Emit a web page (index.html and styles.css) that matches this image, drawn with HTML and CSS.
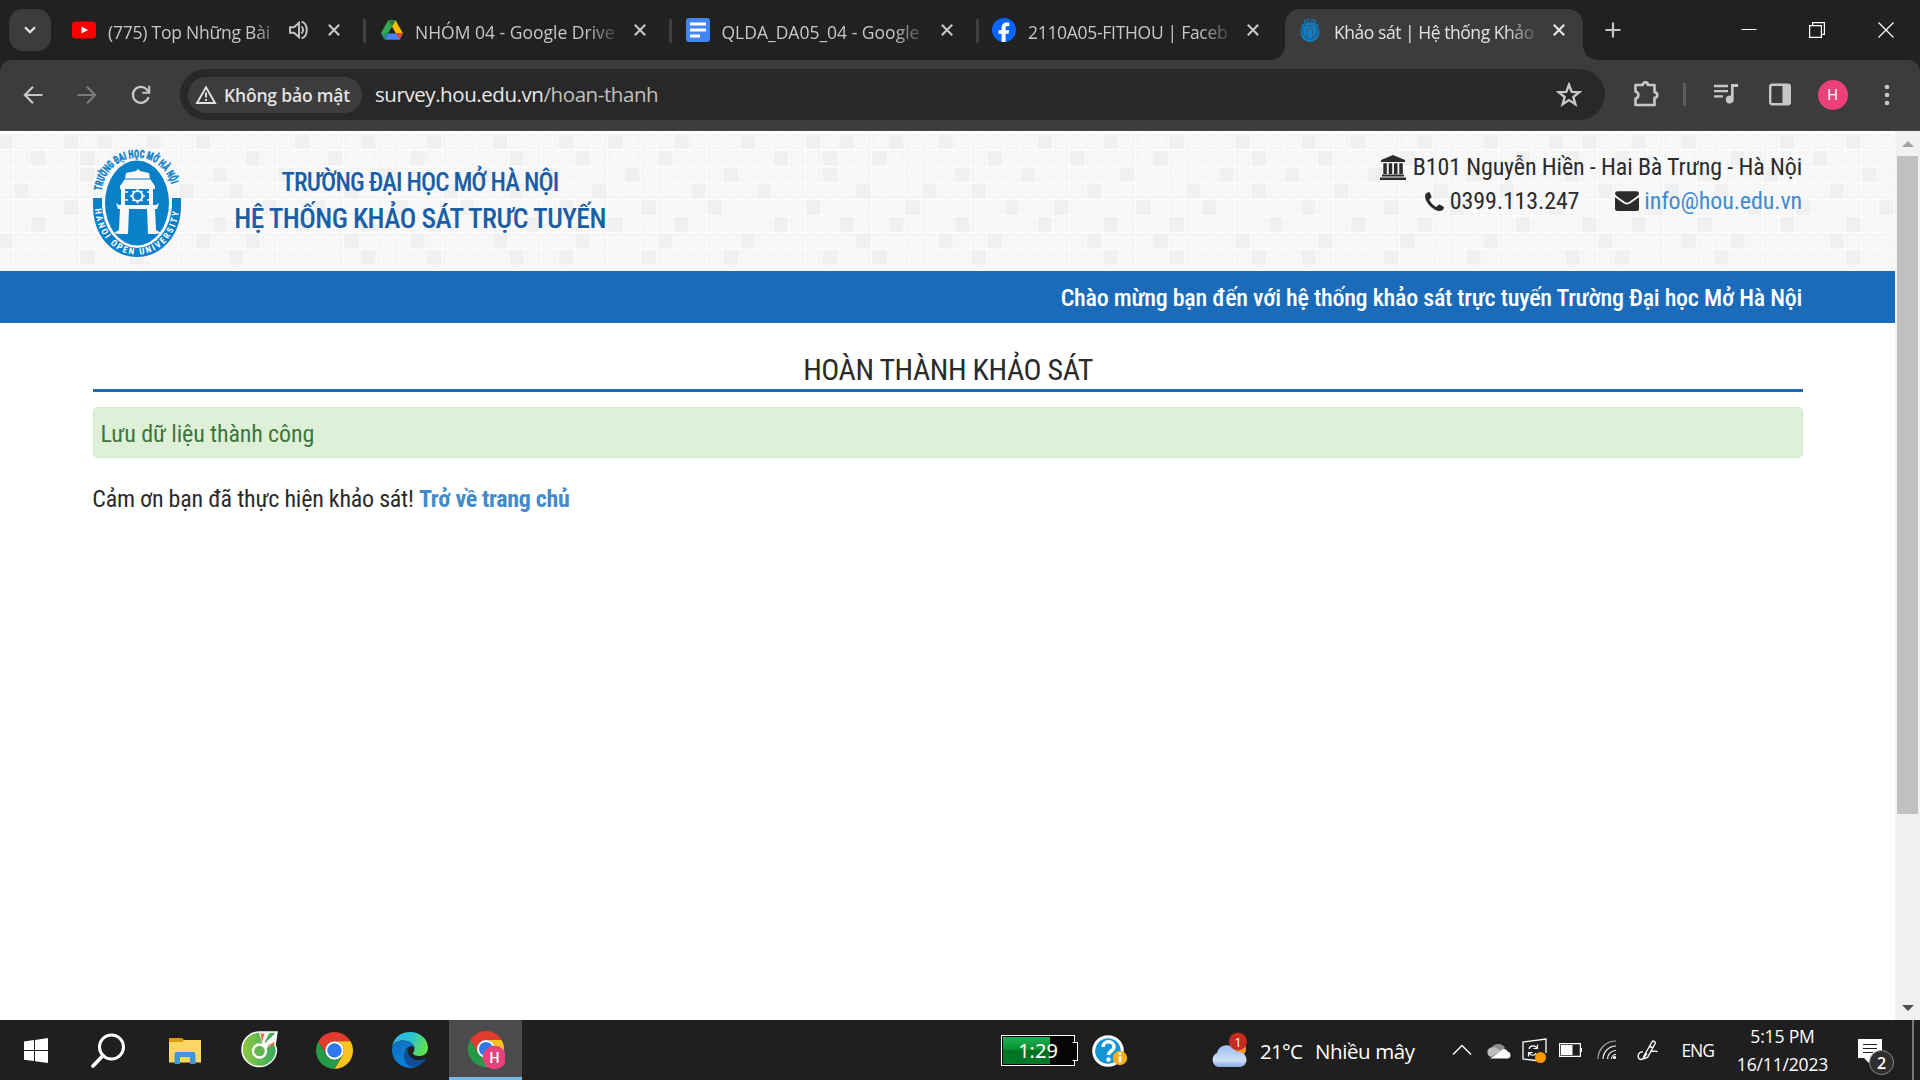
FILE: index.html
```html
<!DOCTYPE html>
<html lang="vi">
<head>
<meta charset="utf-8">
<title>Khảo sát | Hệ thống Khảo sát</title>
<link rel="stylesheet" href="styles.css">
</head>
<body>
<svg class="defs" width="0" height="0" aria-hidden="true">
  <symbol id="i-x" viewBox="0 0 22 22"><path d="M5.8 5.8l10.4 10.4M16.2 5.8L5.8 16.2" fill="none" stroke="currentColor" stroke-width="2.1"/></symbol>
  <symbol id="i-chrome" viewBox="0 0 48 48">
    <path fill="#e33b2e" d="M13.61 30 3.22 12A24 24 0 0 1 44.78 12H24A12 12 0 0 0 13.61 30z"/>
    <path fill="#fcc31e" d="M34.39 30 24 48A24 24 0 0 0 44.78 12H24a12 12 0 0 1 10.39 18z"/>
    <path fill="#259b48" d="M13.61 30A12 12 0 0 0 34.39 30L24 48A24 24 0 0 1 3.22 12z"/>
    <circle cx="24" cy="24" r="12" fill="#fff"/><circle cx="24" cy="24" r="9.4" fill="#2f78ee"/>
  </symbol>
  <symbol id="i-gate" viewBox="0 0 88 108">
    <path fill="#0a80c9" d="M0 49h9v10h70V49h9v8C88 87 68 108 44 108S0 87 0 57z"/>
    <ellipse cx="44" cy="54" rx="35" ry="45" fill="#f8f8f8"/>
    <ellipse cx="44" cy="54" rx="32" ry="42.500" fill="#0a80c9"/>
    <path fill="#f8f8f8" d="M33 24l10-2 2-2 2 2 9 2 1 6 5 7v3H27v-3l5-7zM28 40h4v16h-4zM56 40h4v16h-4zM23 54l3 2h37l3-2-2 6H25zM27 60h9l-1 25h-9l-5-1 5-3zM54 60h8l1 21 5 3-5 1h-8z"/>
    <path stroke="#0a80c9" stroke-width="1" d="M32 30h25"/>
    <circle cx="44.500" cy="47" r="5" fill="none" stroke="#f8f8f8" stroke-width="2"/>
    <path d="M44.500 39.500v3M44.500 51.500v3M37 47h3M49 47h3M39.500 42l2 2M47.500 50l2 2M49.500 42l-2 2M41.500 50l-2 2M32 43h3M32 51h3M54 43h3M54 51h3" stroke="#f8f8f8" stroke-width="1.500"/>
  </symbol>
</svg>

<header class="chrome">
  <div class="tabstrip">
    <button class="tab-search"><svg width="18" height="18" viewBox="0 0 18 18"><path d="M4 6.200l5 5 5-5" fill="none" stroke="#e6e6e6" stroke-width="2.300"/></svg></button>
    <div class="tab">
      <svg class="fav" viewBox="0 0 24 24"><rect y="3.500" width="24" height="17" rx="4" fill="#f00"/><path d="M9.500 8.500v7l6.500-3.500z" fill="#fff"/></svg>
      <span class="title short">(775) Top Những Bài</span>
      <svg class="snd" width="22" height="22" viewBox="0 0 22 22" fill="none" stroke="#c7c7c7" stroke-width="1.900"><path d="M2 8.300h4l5-4.500v14.400l-5-4.500H2z"/><path d="M13.500 7.300c2 2 2 5.400 0 7.400" /><path d="M13.500 2.700c7 2 7 14.600 0 16.600"/></svg>
      <svg class="x"><use href="#i-x"/></svg>
    </div>
    <div class="tab sep">
      <svg class="fav drive" viewBox="0 0 87.300 78"><path fill="#4285f4" d="M16 78L29 52h58L74 78z"/><path fill="#34a853" d="M29 0L0 51l14 27L44 26z"/><path fill="#fbbc04" d="M29 0h29l29 52H58z"/><path fill="#ea4335" d="M58 52h29L74 78z"/><path fill="#188038" d="M29 0h29L44 26z"/><path fill="#1967d2" d="M14 78l15-26H0z" opacity=".35"/><path fill="#202221" d="M44 27l14 25H29z"/></svg>
      <span class="title">NHÓM 04 - Google Drive</span>
      <svg class="x"><use href="#i-x"/></svg>
    </div>
    <div class="tab sep">
      <svg class="fav" viewBox="0 0 24 24"><rect width="24" height="24" rx="3" fill="#4285f4"/><path d="M4 6h16M4 12h16M4 18h10" stroke="#fff" stroke-width="2.800"/></svg>
      <span class="title">QLDA_DA05_04 - Google</span>
      <svg class="x"><use href="#i-x"/></svg>
    </div>
    <div class="tab sep">
      <svg class="fav" viewBox="0 0 24 24"><circle cx="12" cy="12" r="12" fill="#0866ff"/><path fill="#fff" d="M9.600 24v-8.200H6.500v-3.600h3.100v-1.600C9.600 6.300 11.500 4.500 15 4.500c.8 0 1.700.1 2.300.3v3.100h-1.600c-1.500 0-2.100.7-2.100 2.200v2.100h3.600l-.7 3.600h-2.900V24z"/></svg>
      <span class="title tight">2110A05-FITHOU | Faceb</span>
      <svg class="x"><use href="#i-x"/></svg>
    </div>
    <div class="tab active">
      <svg class="fav" viewBox="0 0 24 24"><path d="M6 4l2-2M9 2l2-1M13 1l2 1M16 2l2 2M4 6l1 2M20 6l-1 2" stroke="#0a80c9" stroke-width="1.500"/><ellipse cx="12" cy="13.500" rx="9.500" ry="10.500" fill="#0a80c9"/><ellipse cx="12" cy="12.500" rx="7.600" ry="8.600" fill="none" stroke="#3c3c3c" stroke-width=".8"/><path d="M8 11h8M8 8h8M9 12v8M15 12v8" stroke="#3c5f7c" stroke-width="1.300"/></svg>
      <span class="title tighter">Khảo sát | Hệ thống Khảo</span>
      <svg class="x"><use href="#i-x"/></svg>
    </div>
    <svg class="plus" width="16" height="16" viewBox="0 0 16 16"><path d="M8 .5v15M.5 8h15" stroke="#c7c7c7" stroke-width="2.200"/></svg>
    <div class="winbtns">
      <svg width="16" height="16" viewBox="0 0 16 16"><path d="M.5 7.500h15" stroke="#fff"/></svg>
      <svg width="16" height="16" viewBox="0 0 16 16" fill="none" stroke="#fff" stroke-width="1.200"><path d="M.6 3.600h11.800v11.800H.6zM3.600 3.600v-3h11.800v11.800h-3"/></svg>
      <svg width="16" height="16" viewBox="0 0 16 16"><path d="M.5.5l15 15M15.500.5l-15 15" stroke="#fff" stroke-width="1.200"/></svg>
    </div>
  </div>
  <div class="toolbar">
    <svg class="nav" viewBox="0 0 20 20"><path d="M19.500 10H2.500M10 1.800L1.900 10l8.100 8.200" fill="none" stroke="#c7c7c7" stroke-width="2.200"/></svg>
    <svg class="nav dim" viewBox="0 0 20 20"><path d="M.5 10h17M10 1.800l8.100 8.200-8.100 8.200" fill="none" stroke="#7b7b7b" stroke-width="2.200"/></svg>
    <svg class="nav reload" viewBox="0 0 20 20"><path d="M17.600 12A8 8 0 1 1 15.800 4.400L18 6.800" fill="none" stroke="#c7c7c7" stroke-width="2.200"/><path d="M19.300.8v8h-8V6.700h5.900V.8z" fill="#c7c7c7"/></svg>
    <div class="omnibox">
      <div class="chip">
        <svg width="22" height="20" viewBox="0 0 22 20"><path d="M11 2.300L20 18H2z" fill="none" stroke="#e3e3e3" stroke-width="1.900"/><path d="M11 7.500v5M11 14v2" stroke="#e3e3e3" stroke-width="1.900"/></svg>
        <span>Không bảo mật</span>
      </div>
      <span class="url">survey.hou.edu.vn<span class="path">/hoan-thanh</span></span>
      <svg class="star" viewBox="0 0 24 24"><path d="M12 2.500l2.500 6.600 7 .3-5.500 4.400 1.900 6.800-5.900-3.900-5.900 3.900L8 13.800 2.500 9.400l7-.3z" fill="none" stroke="#c7c7c7" stroke-width="2.200"/></svg>
    </div>
    <svg class="puzzle" viewBox="0 0 27 27"><path d="M2.500 5h7.200a2.600 2.600 0 0 1 5.200 0h6.600v7.200a2.800 2.800 0 0 1 0 5.600v7.200h-19v-6.400a3.700 3.700 0 0 0 0-7.200z" fill="none" stroke="#c7c7c7" stroke-width="2.600" stroke-linejoin="round"/></svg>
    <i class="bar"></i>
    <svg class="music" viewBox="0 0 24 20"><path d="M0 2h14M0 7.200h14M0 12.400h9" stroke="#c7c7c7" stroke-width="2.300"/><path d="M17 0h7v3h-4.300v12.500a4 4 0 1 1-2.700-3.700z" fill="#c7c7c7"/></svg>
    <svg class="panel" viewBox="0 0 22 23"><rect x="1.200" y="1.700" width="19.600" height="19.600" rx="2" fill="none" stroke="#c7c7c7" stroke-width="2.400"/><path d="M13.500 1.700h7v19.600h-7z" fill="#c7c7c7"/></svg>
    <span class="avatar">H</span>
    <svg class="dots" viewBox="0 0 6 24" fill="#c7c7c7"><circle cx="3" cy="4" r="2.300"/><circle cx="3" cy="12" r="2.300"/><circle cx="3" cy="20" r="2.300"/></svg>
  </div>
</header>

<main class="view">
  <div class="page">
    <div class="banner">
      <svg class="tiles" width="100%" height="100%" aria-hidden="true">
        <defs>
          <pattern id="tile" width="16.500" height="16.500" patternUnits="userSpaceOnUse" x="13.900" y="3">
            <rect width="16.500" height="16.500" fill="#fdfdfd"/><rect x=".4" y=".4" width="14.700" height="14.700" rx="1" fill="#f1f1f1"/><rect x="1.500" y="1.500" width="12.500" height="12.500" fill="#f8f8f8"/>
          </pattern>
          <pattern id="dark" width="742.500" height="165" patternUnits="userSpaceOnUse" x="63.400" y="3">
            <path fill="none" stroke="#f0f0f0" stroke-width="14" d="M.8 7.800h14M33.800 7.800h14M83.300 7.800h14M132.800 7.800h14M231.800 7.800h14M297.800 7.800h14M363.800 7.800h14M429.800 7.800h14M495.800 7.800h14M545.300 7.800h14M611.300 7.800h14M677.300 7.800h14
            M17.300 24.300h14M66.800 24.300h14M182.300 24.300h14M264.800 24.300h14M347.300 24.300h14M446.300 24.300h14M512.300 24.300h14M594.800 24.300h14M710.300 24.300h14
            M17.300 40.800h14M149.300 40.800h14M215.300 40.800h14M314.300 40.800h14M413.300 40.800h14M479.300 40.800h14M561.800 40.800h14M660.800 40.800h14
            M50.300 57.300h14M116.300 57.300h14M165.800 57.300h14M281.300 57.300h14M380.300 57.300h14M446.300 57.300h14M528.800 57.300h14M627.800 57.300h14M694 57.300h14
            M.8 73.800h14M99.800 73.800h14M198.800 73.800h14M248.300 73.800h14M330.800 73.800h14M396.800 73.800h14M495.800 73.800h14M578.300 73.800h14M644.300 73.800h14
            M33.800 90.300h14M83.300 90.300h14M149.300 90.300h14M231.800 90.300h14M297.800 90.300h14M363.800 90.300h14M462.800 90.300h14M545.300 90.300h14M611.300 90.300h14M710.300 90.300h14
            M50.300 106.800h14M132.800 106.800h14M182.300 106.800h14M281.300 106.800h14M347.300 106.800h14M429.800 106.800h14M512.300 106.800h14M594.800 106.800h14M677.300 106.800h14
            M17.300 123.300h14M66.800 123.300h14M165.800 123.300h14M297.800 123.300h14M363.800 123.300h14M446.300 123.300h14M495.800 123.300h14M578.300 123.300h14M660.800 123.300h14"/>
          </pattern>
        </defs>
        <rect y="3" width="100%" height="140" fill="url(#tile)"/><rect y="3" width="100%" height="140" fill="url(#dark)"/>
      </svg>
      <svg class="logo" viewBox="0 0 88 108">
        <defs><path id="arc-top" d="M8.500 42C15-2.500 73-2.500 79.500 42"/><path id="arc-bot" d="M1.800 60C8 121 80 121 86.200 60"/></defs>
        <use href="#i-gate"/>
        <text class="seal top"><textPath href="#arc-top" textLength="100" lengthAdjust="spacingAndGlyphs">TRƯỜNG ĐẠI HỌC MỞ HÀ NỘI</textPath></text>
        <text class="seal bot"><textPath href="#arc-bot" textLength="134">HANOI OPEN UNIVERSITY</textPath></text>
      </svg>
      <div class="names"><p class="n1">TRƯỜNG ĐẠI HỌC MỞ HÀ NỘI</p><p class="n2">HỆ THỐNG KHẢO SÁT TRỰC TUYẾN</p></div>
      <div class="contact">
        <p><svg width="26" height="25" viewBox="0 0 26 25" fill="#2b2b2b"><path d="M13 0l12 5v2H1V5zM3.300 8.200h3.500V19H3.300zM8.700 8.200h3.500V19H8.700zM14 8.200h3.500V19H14zM19.300 8.200h3.500V19h-3.500zM2 19.500h22v2H2zM0 22.500h26V25H0z"/></svg><span>B101 Nguyễn Hiền - Hai Bà Trưng - Hà Nội</span></p>
        <p><svg class="ph" width="19" height="19" viewBox="0 0 19 19" fill="#2b2b2b"><path d="M0 4C0 1.500 2.300.3 4 0c.8 0 2 3.200 2.600 4.800.3 1-2.200 2-2.200 2.900 0 1.200 4.400 6.600 6.900 7 1 0 2-2.600 3-2.300 1.300.4 4.700 2.200 4.700 2.800 0 2-2 3.800-4.500 3.800C9 19 0 11 0 4z"/></svg><span>0399.113.247</span>
        <svg class="env" width="24" height="20" viewBox="0 0 24 20" fill="#2b2b2b"><path d="M0 2.500Q0 .3 2.500.3h19Q24 .3 24 2.500 24 4 21.500 5.800L14 11q-2 1.400-4 0L2.500 5.800Q0 4 0 2.500zM0 6.300l8.500 6q3.500 2.300 7 0l8.500-6V17.500Q24 20 21.500 20h-19Q0 20 0 17.500z"/></svg><a class="mail">info@hou.edu.vn</a></p>
      </div>
    </div>
    <div class="welcome">Chào mừng bạn đến với hệ thống khảo sát trực tuyến Trường Đại học Mở Hà Nội</div>
    <div class="content">
      <h1>HOÀN THÀNH KHẢO SÁT</h1>
      <div class="alert">Lưu dữ liệu thành công</div>
      <p class="thanks">Cảm ơn bạn đã thực hiện khảo sát! <a>Trở về trang chủ</a></p>
    </div>
  </div>
  <div class="scroll"><i class="up"></i><i class="thumb"></i><i class="down"></i></div>
</main>

<footer class="taskbar">
  <div class="app"><svg width="24" height="25" viewBox="0 0 24 25" fill="#fff"><path d="M0 3.500l10-1.400v10H0zM11 2l13-2v12.100H11zM0 13.100h10v10L0 21.700zM11 13.100h13V25l-13-1.800z"/></svg></div>
  <div class="app search"><svg width="35" height="35" viewBox="0 0 35 35"><circle cx="20.500" cy="14" r="12" fill="none" stroke="#fff" stroke-width="3"/><path d="M12 22.500L2 33" stroke="#fff" stroke-width="3.600" stroke-linecap="round"/></svg></div>
  <div class="app"><svg width="32" height="27" viewBox="0 0 32 27"><path d="M0 1h13l2 2v4H0z" fill="#e09c06"/><path d="M0 5h13l2-2h17v22.500H0z" fill="#fdd567"/><path d="M5.500 27V17q0-2 2-2h17q2 0 2 2v10H21v-7H11v7z" fill="#3b97de"/></svg></div>
  <div class="app"><svg width="37" height="38" viewBox="0 0 37 38">
    <defs><linearGradient id="cc" x2="1"><stop offset="0" stop-color="#8fc93f"/><stop offset="1" stop-color="#35a861"/></linearGradient></defs>
    <path d="M18.500 1H36l-2 13q1.500 3 1.500 6a17.300 17.300 0 1 1-17-19z" fill="url(#cc)" stroke="#fff" stroke-width="1.500"/>
    <path d="M21 12L18 1.500h18l-2 10-9 6z" fill="#fff"/><circle cx="18.500" cy="20" r="6.500" fill="#63b750" stroke="#fff" stroke-width="2.400"/>
    <path d="M19.500 2.500h4l-2.500 9z" fill="#f26a3d"/><path d="M33.500 2.500l-5 0-4.500 9z" fill="#49ad5c" stroke="#49ad5c"/><path d="M33.500 10.500l-1 3.500-7.500 2z" fill="#f26a3d"/></svg></div>
  <div class="app"><svg width="37" height="37"><use href="#i-chrome"/></svg></div>
  <div class="app"><svg width="36" height="36" viewBox="0 0 36 36">
    <defs><linearGradient id="eg" x2="1" y2=".3"><stop offset="0" stop-color="#2fb3ee"/><stop offset=".55" stop-color="#2bc3d2"/><stop offset="1" stop-color="#5ddf52"/></linearGradient><linearGradient id="eb" x2=".6" y2="1"><stop offset="0" stop-color="#0f6fc0"/><stop offset="1" stop-color="#0a84dc"/></linearGradient></defs>
    <path d="M0 15C2 5 9 0 18 0c11 0 18 8 18 15.500 0 5-3.500 8.500-8.500 8.500-4 0-6.500-1.300-6.500-2.800 0-1 1.500-2 1.500-4.700C22.500 12 17 8.500 11 8.500 5.500 8.500 2 11 0 15z" fill="url(#eg)"/>
    <path d="M0 18c0-6 5-9.500 11-9.500 6 0 10 3 11 6-6-1.500-9.500 3-9.500 8 0 7 5 11.500 11 13C10 38 0 29 0 18z" fill="url(#eb)"/>
    <path d="M15.500 16C10 20 10 34 22 35.600c5-1 9-4.300 11.300-8.100.4-.8-.3-1.100-1-.7C24 31 14.500 25 15.500 16z" fill="#104f97"/></svg></div>
  <div class="app on"><svg width="38" height="44" viewBox="0 0 38 44"><use href="#i-chrome" width="36" height="36" x="1" y="4"/><circle cx="27.500" cy="30.500" r="11.800" fill="#e8407c"/><text x="27.500" y="35.500" text-anchor="middle" class="h">H</text></svg></div>

  <div class="battery"><span>1:29</span></div>
  <svg class="help" width="37" height="35" viewBox="0 0 37 35"><circle cx="16" cy="17" r="14.300" fill="#1295d3" stroke="#fff" stroke-width="3"/><path d="M11 13c0-7 11-7 11 0 0 4-5.500 4-5.500 8" fill="none" stroke="#fff" stroke-width="3.600"/><circle cx="16.500" cy="25.500" r="2.200" fill="#fff"/><circle cx="28" cy="24" r="7.200" fill="#f6ae18"/><path d="M28 22.500v6M28 18.500v2.500" stroke="#fff" stroke-width="2.800"/></svg>
  <div class="weather">
    <svg width="38" height="36" viewBox="0 0 38 36"><defs><linearGradient id="cl" x2="0" y2="1"><stop offset="0" stop-color="#9dbcf0"/><stop offset=".7" stop-color="#cfdff8"/><stop offset="1" stop-color="#86a5e2"/></linearGradient></defs><circle cx="28" cy="17" r="8" fill="#f39a1d"/><path d="M8 35a7.500 7.500 0 0 1-1-14 10 10 0 0 1 19-1.500c6 0 10.500 3 10.500 8S33 35 29 35z" fill="url(#cl)"/><circle cx="28" cy="9.500" r="9" fill="#c92a1e"/><text x="28" y="14.500" text-anchor="middle" class="one">1</text></svg>
    <span class="deg">21°C</span><span class="cond">Nhiều mây</span>
  </div>
  <div class="tray">
    <svg class="t1" width="20" height="12" viewBox="0 0 20 12"><path d="M1 10.500l9-9 9 9" fill="none" stroke="#fff" stroke-width="1.400"/></svg>
    <svg class="t2" width="25" height="17" viewBox="0 0 25 17"><path d="M5 8a7.500 7.500 0 0 1 14-2l-5 6z" fill="#8f8f8f"/><path d="M5 15a5 5 0 0 1 0-9.600c4-1 7 1 10 4z" fill="#bdbdbd"/><path d="M4 16.500L15 9c1-3 6-2.500 6.500.5 4 .5 4 7 0 7z" fill="#fff"/></svg>
    <svg class="t3" width="25" height="25" viewBox="0 0 25 25"><path d="M14 22.500L1 21V4l23-3v14" fill="none" stroke="#fff" stroke-width="1.300"/><path d="M7 11c1-4 6-4 8-1M15.500 6.500V10.500h-4M14 15c-1 3-5 3-7 0M6.500 18.500V14.700h4" fill="none" stroke="#fff" stroke-width="1.200"/><circle cx="18.500" cy="19.500" r="5.500" fill="#ff9800"/></svg>
    <svg class="t4" width="23" height="14" viewBox="0 0 23 14"><path d="M.6.600h20.800v12.800H.6z" fill="none" stroke="#fff" stroke-width="1.200"/><path d="M2 2h11.500v10H2zM21.500 5H23v4h-1.500z" fill="#fff"/></svg>
    <svg class="t5" width="20" height="20" viewBox="0 0 20 20" fill="none" stroke="#fff" stroke-width="1.200"><path d="M1 19C1 9 9 1 19 1" opacity=".6"/><path d="M6 19C6 12 12 6 19 6M10.500 19c0-5 4-8.500 8.500-8.500M14.500 19c0-2.500 2-4.500 4.500-4.500"/><circle cx="17.500" cy="17.500" r="1" fill="#fff"/></svg>
    <svg class="t6" width="22" height="21" viewBox="0 0 22 21" fill="none" stroke="#fff" stroke-width="1.400"><path d="M7 16L15 2c1-1.800 4-.5 3 1.800L10.500 17.500 6.500 19zM6 12c-6-1-6 8-2 7.500 3-.5 4-4 6-6M14 11c3 1 5-1 6.500 1M12 6l4 2"/></svg>
    <span class="lang">ENG</span>
    <div class="clock"><span>5:15 PM</span><span>16/11/2023</span></div>
    <div class="notif"><svg width="37" height="37" viewBox="0 0 37 37"><path d="M0 0h24v19H15l-4 5-5-5H0z" fill="#fff"/><path d="M5 5.500h14M5 9.500h14M5 13.500h10" stroke="#1f1f1f" stroke-width="1.200"/><circle cx="23.500" cy="23.500" r="12" fill="#2e2e2e" stroke="#8a8a8a"/><text x="23.500" y="29.500" text-anchor="middle" class="two">2</text></svg></div>
    <i class="edge"></i>
  </div>
</footer>
</body>
</html>
```
FILE: styles.css
```css
* { box-sizing: border-box; }
html, body { margin: 0; height: 100%; overflow: hidden; }
body { display: flex; flex-direction: column; width: 1920px; height: 1080px; background: #fff; font-family: "Open Sans", "Noto Sans", sans-serif; }
p, h1 { margin: 0; }
svg { display: block; flex: none; }
.defs { position: absolute; }
.chrome { flex: none; height: 131px; background: #202221; }

.tabstrip { display: flex; height: 60px; padding-left: 9px; }
.tab-search { flex: none; width: 42px; height: 42px; margin: 9px 8px 0 0; padding: 0; display: grid; place-items: center; border: 0; border-radius: 14px; background: #3c3c3c; }
.tab { position: relative; flex: none; display: flex; align-items: center; width: 306.5px; padding-left: 13px; color: #c7c7c7; font-size: 17.5px; }
.tab.sep { padding-left: 13.5px; }
.tab.sep::before { content: ""; position: absolute; left: -3px; top: 19px; width: 3px; height: 24px; border-radius: 1px; background: #3f4140; }
.fav { width: 24px; height: 24px; margin-right: 12px; }
.fav.drive { width: 22px; height: 20px; margin-left: 2px; }
.title { width: 202px; margin-top: 3px; white-space: nowrap; -webkit-mask-image: linear-gradient(90deg, #000 85%, rgba(0,0,0,.15)); mask-image: linear-gradient(90deg, #000 85%, rgba(0,0,0,.15)); }
.title.short { width: 172px; letter-spacing: -.22px; }
.title.tight { letter-spacing: -.3px; }
.title.tighter { letter-spacing: -.45px; }
.snd { margin-left: 8px; }
.x { width: 22px; height: 22px; margin-left: 12px; color: #c7c7c7; }
.short ~ .x { margin-left: 12.5px; }
.tab.active { width: 298px; height: 51px; margin-top: 9px; padding-bottom: 9px; border-radius: 15px 15px 0 0; background: #3c3c3c; color: #e3e3e3; }
.active .x { color: #e8e8e8; }
.active::before, .active::after { content: ""; position: absolute; bottom: 0; width: 14px; height: 14px; }
.active::before { left: -14px; background: radial-gradient(circle at 0 0, #202221 13.5px, #3c3c3c 14px); }
.active::after { right: -14px; background: radial-gradient(circle at 100% 0, #202221 13.5px, #3c3c3c 14px); }
.plus { margin: 22px 0 0 22px; }
.winbtns { display: flex; gap: 52.5px; margin: 22px 0 0 119.5px; }

.toolbar { display: flex; align-items: center; height: 71px; padding: 0 0 1px 23px; border-bottom: 1px solid #4a4648; border-radius: 12px 12px 0 0; background: #3c3c3c; }
.nav { width: 20px; height: 20px; }
.nav.dim { margin-left: 34px; }
.nav.reload { margin-left: 34px; }
.omnibox { display: flex; align-items: center; width: 1425px; height: 51px; margin-left: 29px; padding-left: 8px; border-radius: 26px; background: #282828; }
.chip { display: flex; align-items: center; width: 174px; height: 36px; padding-left: 7px; gap: 7px; border-radius: 18px; background: #3c3c3c; color: #e3e3e3; font-size: 17.5px; font-weight: 600; letter-spacing: -.18px; white-space: nowrap; }
.url { margin: 0 0 1px 13px; color: #e8e8e8; font-size: 20.5px; letter-spacing: -.43px; white-space: nowrap; }
.path { color: #c0c0c0; }
.star { width: 26px; height: 26px; margin: 0 23px 0 auto; }
.puzzle { width: 27px; height: 27px; margin: -3px 0 0 27.5px; }
.bar { width: 3px; height: 23px; margin-left: 23px; background: #5e5e5e; }
.music { width: 24px; height: 20px; margin: -2px 0 0 28px; }
.panel { width: 22px; height: 23px; margin-left: 31px; }
.avatar { width: 30px; height: 30px; margin-left: 27px; border-radius: 50%; background: #ec407a; color: #fff; font: 15px/30px Roboto, sans-serif; text-align: center; }
.dots { width: 6px; height: 24px; margin-left: 36px; }

.view { display: flex; height: 889px; }
.page { width: 1895px; font-family: "Roboto Condensed", Roboto, sans-serif; color: #2b2b2b; font-size: 24px; letter-spacing: -.14px; }
.banner { position: relative; display: flex; height: 140px; padding: 18px 93px 0 93px; }
.tiles { position: absolute; left: 0; top: 0; }
.logo, .names, .contact { position: relative; }
.logo { width: 88px; height: 108px; overflow: visible; }
.seal { font: 700 11px "Roboto Condensed", sans-serif; fill: #0a80c9; letter-spacing: 0; }
.seal.top { stroke: #0a80c9; stroke-width: .4px; }
.seal.bot { font-size: 9px; fill: #fff; }
.names { width: 400px; margin-left: 39px; padding-top: 16px; text-align: center; color: #1a5fa5; font-weight: 500; }
.n1 { font-size: 25px; line-height: 36px; letter-spacing: -.87px; }
.n2 { font-size: 27.500px; line-height: 36px; letter-spacing: -.55px; margin-top: -.5px; }
.contact { margin-left: auto; padding-top: 1px; }
.contact p { display: flex; justify-content: flex-end; align-items: center; height: 34px; gap: 7px; white-space: nowrap; }
.contact .ph { margin-right: -1px; }
.env { margin-left: 29px; margin-right: -2px; }
.mail { color: #428bca; }
.welcome { height: 52px; padding-right: 93px; background: #1a6bba; color: #fff; font-weight: 500; line-height: 54px; text-align: right; letter-spacing: -.24px; }
.content { padding: 26px 92px 0 93px; }
h1 { height: 43px; border-bottom: 3px solid #1a6bba; font-size: 30px; font-weight: 400; line-height: 42px; text-align: center; letter-spacing: -.45px; }
.alert { height: 51px; margin-top: 15px; padding-left: 6.500px; border: 1px solid #d6e9c6; border-radius: 5px; background: #dff0d8; color: #3c763d; line-height: 53px; }
.thanks { margin: 23px 0 0 -.7px; line-height: 36px; letter-spacing: -.23px; }
.thanks a { color: #428bca; font-weight: 700; letter-spacing: -.33px; }

.scroll { display: flex; flex-direction: column; align-items: center; width: 25px; background: #f1f1f1; }
.up, .down { border: 6px solid transparent; }
.up { height: 6px; margin-top: 10px; border-width: 0 6px 6px; border-bottom-color: #a3a3a3; }
.thumb { width: 21px; height: 658px; margin-top: 9px; background: #c1c1c1; }
.down { margin-top: 191px; border-width: 6px 6px 0; border-top-color: #505050; }

.taskbar { display: flex; align-items: center; height: 60px; background: #1f1f1f; color: #fff; }
.app { display: grid; place-items: center; flex: none; width: 75px; height: 60px; }
.app:first-child { width: 72px; }
.app.search { width: 72px; margin-right: 3px; }
.app.on { width: 73px; margin-left: 2px; border-bottom: 3px solid #76b9ed; background: #4c4c4c; }
.h { font: 500 14px Roboto, sans-serif; fill: #fff; }
.battery { position: relative; flex: none; width: 74px; height: 31px; margin-left: 479px; border: 1px solid #fff; padding: 1px; background: linear-gradient(#1faf52, #0b9333 45%, #007223 50%, #007a27) 1px 1px / 47px 27px no-repeat #050505; font: 20px/27px "Noto Sans", sans-serif; text-align: center; }
.battery::after { content: ""; position: absolute; right: -4px; top: 6px; width: 4px; height: 17px; border: 1px solid #fff; border-left-color: #050505; background: #050505; }
.help { margin: 3px 0 0 17px; }
.weather { display: flex; flex: none; align-items: center; width: 205px; margin-left: 81px; font-size: 20.5px; white-space: nowrap; }
.weather svg { margin: -1px 12px 0 0; }
.deg { width: 42px; margin-right: 13px; letter-spacing: -.75px; }
.cond { letter-spacing: -.4px; }
.weather span { margin-top: 2px; }
.one { font: 13px "Open Sans", sans-serif; fill: #fff; }
.tray { display: flex; flex: none; align-items: center; margin-left: 37px; }
.t2 { margin-left: 14px; }
.t3 { margin-left: 11px; }
.t4 { margin-left: 12px; }
.t5 { margin-left: 15px; }
.t6 { margin-left: 20px; }
.lang { width: 34px; margin-left: 22.5px; font-size: 17.5px; letter-spacing: -1.1px; }
.clock { display: flex; flex-direction: column; align-items: center; width: 96px; margin-left: 19px; font-size: 17.5px; line-height: 28px; letter-spacing: -.15px; }
.notif { margin: 14px 0 0 27px; }
.two { font: 600 16px "Open Sans", sans-serif; fill: #fff; }
.edge { width: 2px; height: 60px; margin-left: 17px; background: #777; }
```
